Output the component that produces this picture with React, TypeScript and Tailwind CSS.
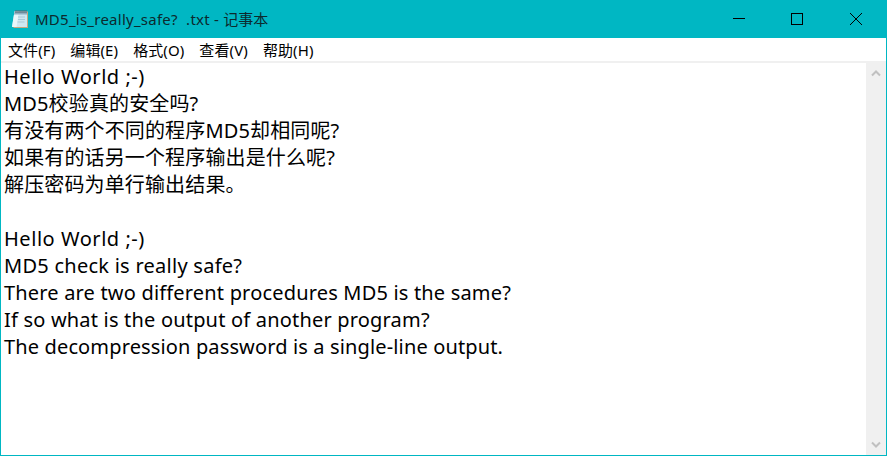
// tracking is tuned per line so the run widths land on the reference
const textLines = [
  { text: 'Hello World ;-)', cls: 'tracking-[0.54px]' },
  { text: 'MD5校验真的安全吗?', cls: 'tracking-[0.14px]' },
  { text: '有没有两个不同的程序MD5却相同呢?', cls: 'tracking-[0.14px]' },
  { text: '如果有的话另一个程序输出是什么呢?', cls: 'tracking-[0.14px]' },
  { text: '解压密码为单行输出结果。', cls: 'tracking-[0.14px]' },
  { text: '', cls: '' },
  { text: 'Hello World ;-)', cls: 'tracking-[0.54px]' },
  { text: 'MD5 check is really safe?', cls: 'tracking-[0.26px]' },
  { text: 'There are two different procedures MD5 is the same?', cls: 'tracking-[0.18px]' },
  { text: 'If so what is the output of another program?', cls: 'tracking-[0.19px]' },
  { text: 'The decompression password is a single-line output.', cls: 'tracking-[0.14px]' },
];

const menus = ['文件(F)', '编辑(E)', '格式(O)', '查看(V)', '帮助(H)'];

function NotepadIcon() {
  return (
    <svg width="18" height="20" viewBox="0 0 18 20" className="shrink-0">
      <path d="M4 2.500h13v16.500H2.500z" fill="#c9a77f" />
      <path d="M3.500 2.500H16V18H1z" fill="#cfe8f2" />
      <path d="M3.500 2.500H8L5.500 18H1z" fill="#e8f6fa" />
      <path d="M3.500 2.500H16v3H3z" fill="#8fb0c2" />
      <path d="M5 1v3M7 1v3M9 1v3M11 1v3M13 1v3M15 1v3" stroke="#50626e" strokeWidth="1" />
      <path d="M7 8h7M7 10.500h7M6.500 13h7" stroke="#a9cbd9" strokeWidth="1" />
    </svg>
  );
}

export default function App() {
  return (
    <div className="flex h-[456px] w-[887px] flex-col overflow-hidden border border-t-0 border-[#00b7c3] bg-white font-['Noto_Sans','Noto_Sans_CJK_SC',sans-serif] text-black">
      <div className="flex h-[38px] shrink-0 items-center bg-[#00b7c3] pl-[10px] pr-[24px]">
        <NotepadIcon />
        <span className="ml-[6px] text-[15px] leading-none whitespace-pre text-[#0c2a2e]">
          <span className="tracking-[0.25px]">MD5_is_really_safe?  .txt - </span>记事本
        </span>
        <div className="ml-auto flex items-center">
          <svg width="12" height="12" viewBox="0 0 12 12"><path d="M0 5.500h12" stroke="#000" /></svg>
          <svg width="12" height="12" viewBox="0 0 12 12" className="ml-[46px]"><rect x="0.500" y="0.500" width="11" height="11" fill="none" stroke="#000" /></svg>
          <svg width="12" height="12" viewBox="0 0 12 12" className="ml-[47px]"><path d="M0 0l12 12M12 0L0 12" stroke="#000" /></svg>
        </div>
      </div>
      <div className="flex h-[23px] shrink-0 items-center gap-[15px] pl-[7px] pt-[1px] text-[15px] leading-none tracking-[0.1px]">
        {menus.map((m) => (
          <span key={m}>{m}</span>
        ))}
      </div>
      <div className="h-[2px] shrink-0 bg-[#f0f0f0]" />
      <div className="flex min-h-0 flex-1">
        <div className="min-w-0 flex-1 pl-[3px] text-[20px] leading-[27px]">
          {textLines.map((line, i) => (
            <div key={i} className={`h-[27px] whitespace-pre ${line.cls}`}>{line.text}</div>
          ))}
        </div>
        <div className="flex w-[20px] shrink-0 flex-col items-center justify-between bg-[#f0f0f0] pt-[7px] pb-[7px]">
          <svg width="10" height="7" viewBox="0 0 10 7"><path d="M1 5.500l4-4 4 4" fill="none" stroke="#c0c0c0" strokeWidth="2" /></svg>
          <svg width="10" height="7" viewBox="0 0 10 7"><path d="M1 1.500l4 4 4-4" fill="none" stroke="#c0c0c0" strokeWidth="2" /></svg>
        </div>
      </div>
    </div>
  );
}
